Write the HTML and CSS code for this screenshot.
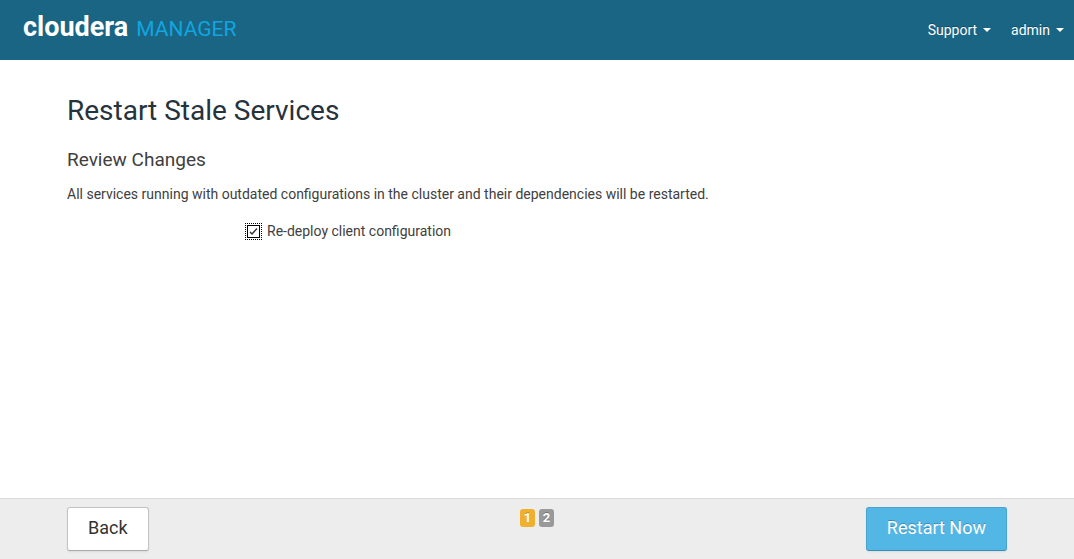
FILE: index.html
```html
<!DOCTYPE html>
<html lang="en">
<head>
<meta charset="utf-8">
<meta name="viewport" content="width=device-width, initial-scale=1">
<title>Restart Stale Services - Cloudera Manager</title>
<link rel="stylesheet" href="styles.css">
</head>
<body class="page">
<header class="navbar">
  <a class="brand" href="#"><span class="brand-name">cloudera</span><span class="brand-product">MANAGER</span></a>
  <nav class="nav">
    <button class="nav-item" type="button">Support<span class="caret"></span></button>
    <button class="nav-item" type="button">admin<span class="caret"></span></button>
  </nav>
</header>
<main class="content">
  <h1 class="title">Restart Stale Services</h1>
  <h2 class="subtitle">Review Changes</h2>
  <p class="text">All services running with outdated configurations in the cluster and their dependencies will be restarted.</p>
  <div class="option">
    <input class="checkbox" type="checkbox" id="redeploy" checked>
    <label for="redeploy">Re-deploy client configuration</label>
  </div>
</main>
<footer class="footer">
  <button class="button" type="button">Back</button>
  <ol class="steps">
    <li class="step step-current">1</li>
    <li class="step">2</li>
  </ol>
  <button class="button button-primary" type="button">Restart Now</button>
</footer>
</body>
</html>
```
FILE: styles.css
```css
* { box-sizing: border-box; }

.page {
  display: flex;
  flex-direction: column;
  min-height: 100vh;
  margin: 0;
  background: #fff;
  color: #404040;
  font-family: Roboto, "Liberation Sans", sans-serif;
  font-size: 14px;
  line-height: 20px;
}

.navbar {
  display: flex;
  justify-content: space-between;
  align-items: center;
  height: 60px;
  padding: 0 10px 0 23px;
  background: #1a6584;
}

.brand {
  display: flex;
  align-items: baseline;
  gap: 8px;
  padding-bottom: 4px;
  text-decoration: none;
  line-height: 32px;
}

.brand-name {
  color: #fff;
  font-size: 27px;
  font-weight: 700;
}

.brand-product {
  color: #10a5e0;
  font-size: 21px;
}

.nav {
  display: flex;
  gap: 20px;
}

.nav-item {
  display: flex;
  align-items: center;
  gap: 6px;
  padding: 0;
  border: 0;
  background: none;
  color: #fff;
  font: inherit;
  text-shadow: 0 -1px 0 rgba(0, 0, 0, 0.25);
}

.caret {
  border-top: 4px solid #fff;
  border-right: 4px solid transparent;
  border-left: 4px solid transparent;
}

.content {
  flex: 1;
  padding: 31px 67px 20px;
}

.title {
  margin: 0 0 19px;
  color: #26323c;
  font-size: 28px;
  font-weight: 400;
  line-height: 40px;
}

.subtitle {
  margin: 0 0 14px;
  font-size: 19px;
  font-weight: 400;
  line-height: 20px;
}

.text { margin: 0 0 17px; }

.option {
  display: flex;
  align-items: center;
  gap: 7px;
  padding-left: 180px;
}

.checkbox {
  width: 13px;
  height: 13px;
  margin: 0;
  appearance: none;
  border: 1px solid #000;
  background: #fff;
  outline: 1px dotted #000;
  outline-offset: 1px;
}

.checkbox:checked {
  background: #fff url("data:image/svg+xml,%3Csvg xmlns='http://www.w3.org/2000/svg' viewBox='0 0 11 11'%3E%3Cpath d='M2 6 4 8 9 2.5' fill='none' stroke='%23333' stroke-width='1.4'/%3E%3C/svg%3E") center / 11px no-repeat;
}

.footer {
  display: grid;
  grid-template-columns: 1fr auto 1fr;
  align-items: start;
  padding: 8px 67px;
  border-top: 1px solid #d9d9d9;
  background: #ededed;
}

.button {
  justify-self: start;
  height: 44px;
  padding: 0 20px 2px;
  border: 1px solid #c4c4c4;
  border-bottom-color: #aaa;
  border-radius: 3px;
  background: #fff;
  box-shadow: 0 1px 2px rgba(0, 0, 0, 0.08);
  color: #333;
  font: inherit;
  font-size: 18px;
}

.button-primary {
  justify-self: end;
  border-color: #48a5d0;
  border-bottom-color: #388fb7;
  background: #53b7e5;
  color: #fff;
  text-shadow: 0 -1px 0 rgba(0, 0, 0, 0.25);
}

.steps {
  display: flex;
  gap: 4px;
  margin: 2px 0 0;
  padding: 0;
  list-style: none;
}

.step {
  width: 15px;
  height: 18px;
  border-radius: 3px;
  background: #999;
  color: #fff;
  font-size: 13px;
  font-weight: 700;
  line-height: 18px;
  text-align: center;
  text-shadow: 0 -1px 0 rgba(0, 0, 0, 0.25);
}

.step-current { background: #efb02f; }
```
